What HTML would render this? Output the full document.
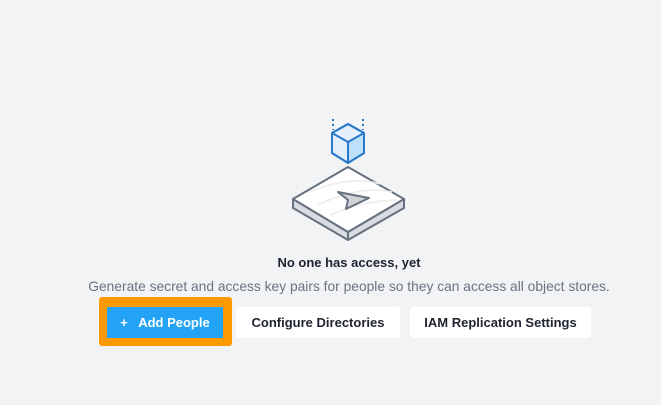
<!DOCTYPE html>
<html><head><style>
body{margin:0;width:661px;height:405px;background:#f2f3f5;font-family:"Liberation Sans",sans-serif;position:relative;overflow:hidden}
.t{position:absolute;left:0;width:698px;text-align:center}
.btn{position:absolute;top:307px;height:31px;border-radius:3px;background:#fff;font-size:13px;font-weight:bold;color:#1f2230;line-height:31px;text-align:center}
</style></head><body>
<svg style="position:absolute;left:0;top:0" width="661" height="405">
<g stroke="#2a78c9" stroke-width="2" stroke-dasharray="2 3"><line x1="333" y1="119" x2="333" y2="130"/><line x1="363" y1="119" x2="363" y2="130"/></g>
<polygon points="348,124 364,133 364,153 348,163 332,153 332,133" fill="#e3f0fc" stroke="#2a78c9" stroke-width="2" stroke-linejoin="round"/>
<polygon points="348,142 364,133 364,153 348,163" fill="#bfe0fa"/>
<polygon points="348,124 364,133 364,153 348,163 332,153 332,133" fill="none" stroke="#2a78c9" stroke-width="2" stroke-linejoin="round"/>
<polyline points="332,133 348,142 364,133" fill="none" stroke="#2a78c9" stroke-width="2" stroke-linejoin="round"/>
<line x1="348" y1="142" x2="348" y2="163" stroke="#2a78c9" stroke-width="2"/>
<polygon points="293,199 348,232 404,199 404,208 348,240 293,208" fill="#d9dce0" stroke="#66717f" stroke-width="2" stroke-linejoin="round"/>
<polygon points="348,167 404,199 348,232 293,199" fill="#fff" stroke="#66717f" stroke-width="2" stroke-linejoin="round"/>
<line x1="348" y1="232" x2="348" y2="240" stroke="#66717f" stroke-width="2"/>
<g stroke="#ececec" stroke-width="1.5" fill="none"><path d="M310,192 Q350,175 380,184"/><path d="M318,205 Q360,185 392,192"/><path d="M330,215 Q365,200 398,200"/></g>
<polygon points="338,192 369,198 346,209 348,200" fill="#cfd3d8" stroke="#66717f" stroke-width="2" stroke-linejoin="round"/>
</svg>
<div class="t" style="top:255px;font-size:13px;font-weight:bold;color:#1f2230">No one has access, yet</div>
<div class="t" style="top:279px;font-size:13.8px;color:#6b7280">Generate secret and access key pairs for people so they can access all object stores.</div>
<div style="position:absolute;left:99px;top:297px;width:133px;height:49px;background:#ff9900;border-radius:3px"></div>
<div class="btn" style="left:107px;width:116px;background:#22a3f5;color:#fff;border-radius:0">+&nbsp;&nbsp; Add People</div>
<div class="btn" style="left:236px;width:164px">Configure Directories</div>
<div class="btn" style="left:410px;width:181px">IAM Replication Settings</div>
</body></html>
